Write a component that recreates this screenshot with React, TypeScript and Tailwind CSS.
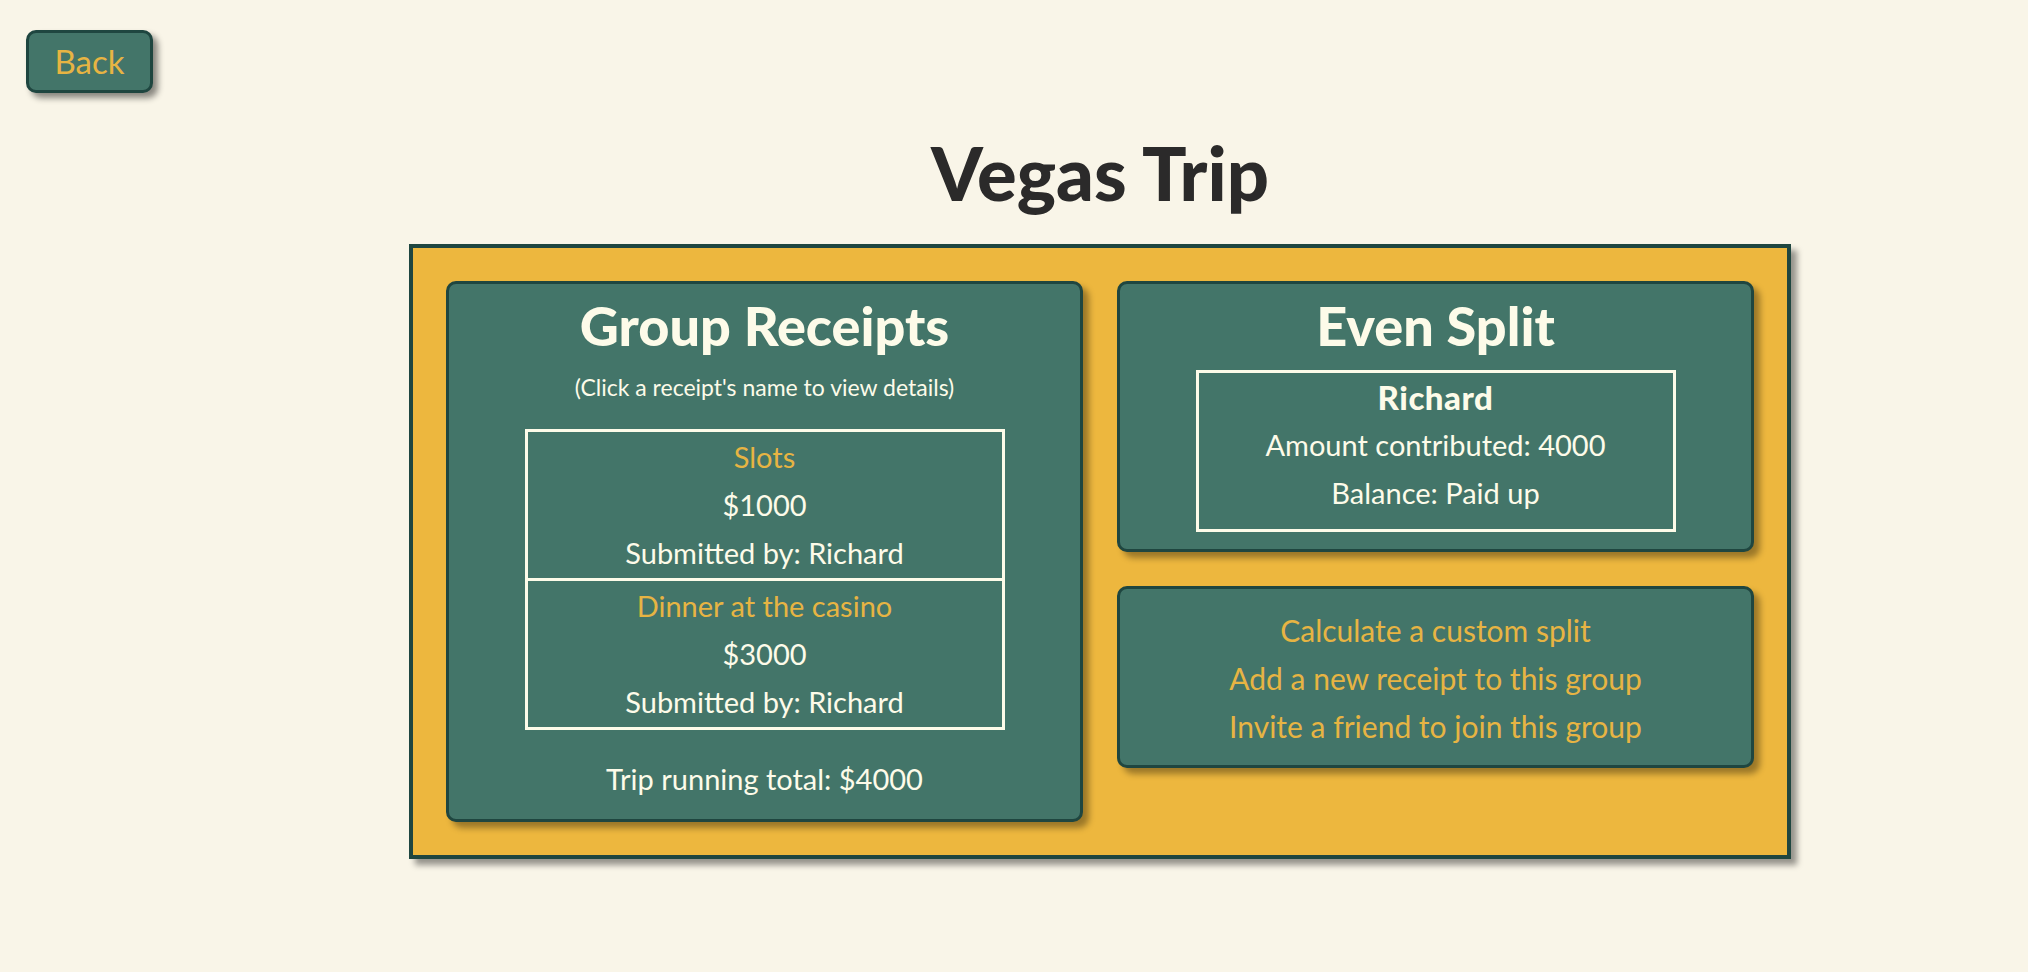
import React from 'react';

const receipts = [
  { name: 'Slots', amount: 1000, by: 'Richard' },
  { name: 'Dinner at the casino', amount: 3000, by: 'Richard' },
];

const actions = [
  'Calculate a custom split',
  'Add a new receipt to this group',
  'Invite a friend to join this group',
];

const Card = ({ children, className = '' }: { children: React.ReactNode; className?: string }) => (
  <div
    className={`bg-[#437569] border-[3px] border-[#1f4640] rounded-[10px] shadow-[6px_6px_6px_rgba(0,0,0,0.35)] text-center ${className}`}
  >
    {children}
  </div>
);

export default function App() {
  return (
    <div className="min-h-screen w-full bg-[#f9f5e8] font-[Lato,sans-serif] flex">
      {/* back button column */}
      <div className="w-[172px] shrink-0 pl-[26px] pt-[30px]">
        <button className="w-[127px] h-[63px] flex items-center justify-center bg-[#437569] border-[3px] border-[#1f4640] rounded-[10px] shadow-[5px_5px_6px_rgba(0,0,0,0.45)] text-[#e7b443] text-[33px] leading-none">
          Back
        </button>
      </div>

      <div className="flex-1 flex flex-col items-center pt-[133px]">
        <h1 className="text-[74px] leading-[79px] font-black text-[#2b2a2a]">Vegas Trip</h1>

        <div className="mt-[32px] w-[1382px] bg-[#edb73e] border-4 border-[#1f4640] p-[33px] shadow-[6px_6px_6px_rgba(0,0,0,0.4)] grid grid-cols-2 gap-[34px] items-start">
          {/* group receipts */}
          <Card className="pt-[10px] pb-[16px] flex flex-col items-center text-[#fdfbe9]">
            <h2 className="text-[54px] leading-[64px] font-black">Group Receipts</h2>
            <p className="mt-[14px] text-[23px] leading-[30px]">(Click a receipt's name to view details)</p>
            <div className="mt-[27px] w-[480px] border-[3px] border-[#fdfbe9]">
              {receipts.map((r, i) => (
                <div
                  key={r.name}
                  className={`text-[29px] leading-[48px] py-[1px] ${i > 0 ? 'border-t-[3px] border-[#fdfbe9]' : ''}`}
                >
                  <div className="text-[#e7b443] cursor-pointer">{r.name}</div>
                  <div>${r.amount}</div>
                  <div>Submitted by: {r.by}</div>
                </div>
              ))}
            </div>
            <div className="mt-[25px] text-[29px] leading-[48px]">Trip running total: $4000</div>
          </Card>

          <div className="flex flex-col gap-[34px]">
            {/* even split */}
            <Card className="pt-[10px] pb-[17px] flex flex-col items-center text-[#fdfbe9]">
              <h2 className="text-[54px] leading-[64px] font-black">Even Split</h2>
              <div className="mt-[12px] w-[480px] border-[3px] border-[#fdfbe9] pb-[12px] text-[29px] leading-[48px]">
                <div className="font-black text-[33px] tracking-[0.5px]">Richard</div>
                <div>Amount contributed: 4000</div>
                <div>Balance: Paid up</div>
              </div>
            </Card>

            {/* actions */}
            <Card className="pt-[17px] pb-[15px] text-[#e7b443] text-[30px] leading-[48px]">
              {actions.map((a) => (
                <div key={a} className="cursor-pointer">
                  {a}
                </div>
              ))}
            </Card>
          </div>
        </div>
      </div>
    </div>
  );
}
